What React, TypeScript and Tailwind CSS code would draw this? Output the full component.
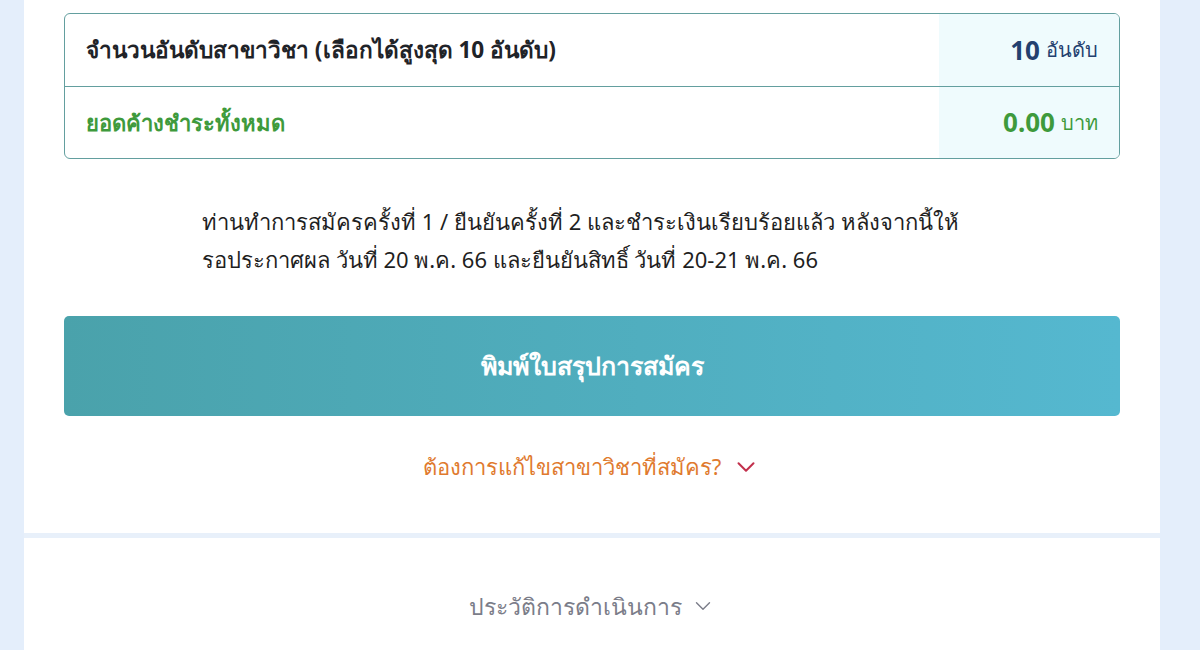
import React from "react";
import { ChevronDown } from "lucide-react";

const headFont = { fontFamily: '"Noto Sans", "Liberation Sans", sans-serif' };

function SummaryTable() {
  return (
    <div className="overflow-hidden rounded-md border-[1.5px] border-[#639f9f]">
      <div className="flex h-[73px] border-b-[1.5px] border-[#639f9f]">
        <div className="flex flex-1 items-center pl-[21px] text-[22.6px] font-bold text-[#1f2328]">
          จำนวนอันดับสาขาวิชา (เลือกได้สูงสุด 10 อันดับ)
        </div>
        <div className="flex w-[180px] items-center justify-end gap-[6px] bg-[#effbfd] pr-[21px]">
          <span className="text-[26px] font-bold text-[#23406f]">10</span>
          <span className="text-[20px] text-[#23406f]">อันดับ</span>
        </div>
      </div>
      <div className="flex h-[71px]">
        <div className="flex flex-1 items-center pl-[21px] text-[22px] font-bold text-[#3e9a3c]">
          ยอดค้างชำระทั้งหมด
        </div>
        <div className="flex w-[180px] items-center justify-end gap-[6px] bg-[#effbfd] pr-[21px]">
          <span className="text-[26px] font-bold text-[#3e9a3c]">0.00</span>
          <span className="text-[20px] text-[#3e9a3c]">บาท</span>
        </div>
      </div>
    </div>
  );
}

export default function App() {
  return (
    <div className="flex h-[650px] w-full overflow-hidden bg-[#e4eefb]" style={headFont}>
      <div className="ml-[24px] flex w-[1136px] flex-col">
        <div className="bg-white px-[40px] pb-[50px] pt-[13px]">
          <SummaryTable />

          <p className="mx-auto mt-[43px] w-[800px] pl-[10px] text-[22px] leading-[38px] text-[#1f1f1f]">
            ท่านทำการสมัครครั้งที่ 1 / ยืนยันครั้งที่ 2 และชำระเงินเรียบร้อยแล้ว หลังจากนี้ให้
            <br />
            รอประกาศผล วันที่ 20 พ.ค. 66 และยืนยันสิทธิ์ วันที่ 20-21 พ.ค. 66
          </p>

          <button className="mt-[38px] flex h-[100px] w-full items-center justify-center rounded-[5px] bg-gradient-to-r from-[#4aa2ab] to-[#55b8d0] text-[25px] font-bold text-white">
            พิมพ์ใบสรุปการสมัคร
          </button>

          <div className="mt-[34px] flex items-center justify-center gap-[10px]">
            <span className="text-[22px] text-[#e07a2e]">ต้องการแก้ไขสาขาวิชาที่สมัคร?</span>
            <ChevronDown className="h-[30px] w-[30px] text-[#c2304c]" strokeWidth={1.6} />
          </div>
        </div>

        <div className="h-[5px] bg-[#e8f0fa]" />

        <div className="flex-1 bg-white">
          <div className="mt-[51px] flex items-center justify-center gap-[8px]">
            <span className="text-[23px] text-[#7b7d89]">ประวัติการดำเนินการ</span>
            <ChevronDown className="h-[26px] w-[26px] text-[#7b7d89]" strokeWidth={1.3} />
          </div>
        </div>
      </div>
    </div>
  );
}
